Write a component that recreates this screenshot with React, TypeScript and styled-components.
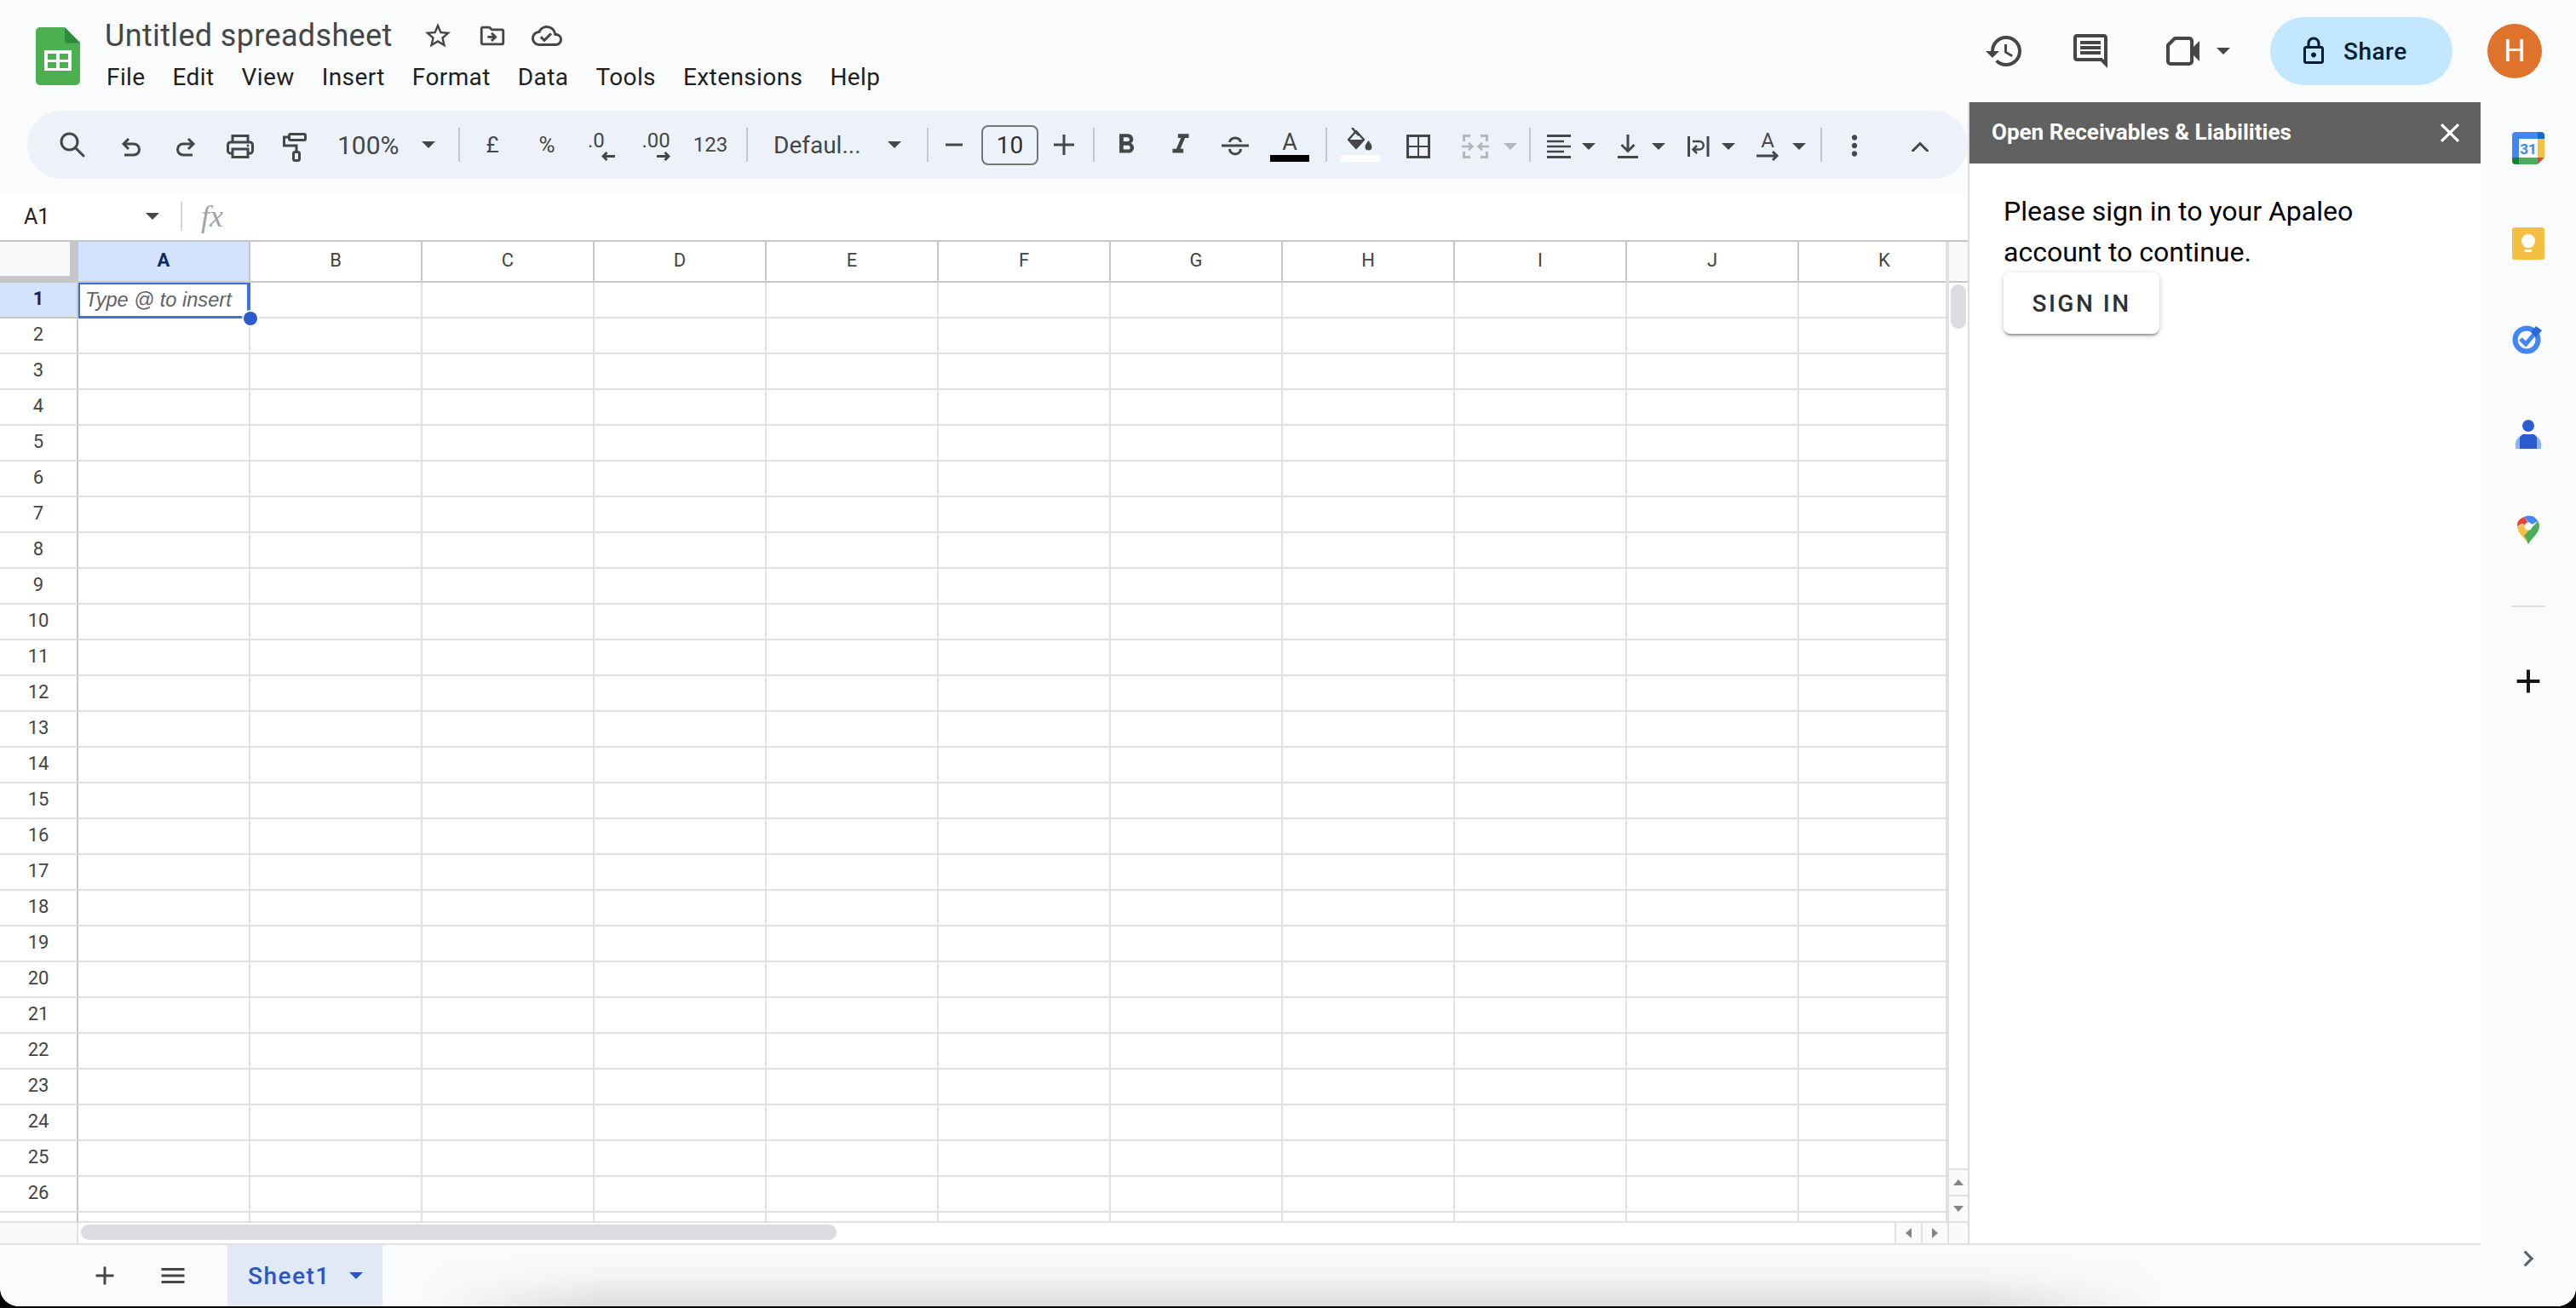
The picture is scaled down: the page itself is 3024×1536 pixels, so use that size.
import React from 'react'
import styled, { createGlobalStyle } from 'styled-components'
import {
  MdAdd,
  MdChevronRight,
  MdClose,
  MdFormatBold,
  MdFormatItalic,
  MdHistory,
  MdMenu,
  MdMoreVert,
  MdOutlineCloudDone,
  MdOutlineComment,
  MdOutlineDriveFileMove,
  MdOutlineLock,
  MdStarBorder
} from 'react-icons/md'

const GlobalStyle = createGlobalStyle`
  html, body {
    margin: 0;
    padding: 0;
    background: #000;
    overflow: hidden;
  }
  * { box-sizing: border-box; }
`

const INK = '#444746'
const MUTED = '#b4b6b9'
const LINE = '#e1e1e1'
const HEAD_LINE = '#c7c7c7'
const COLS = ['A', 'B', 'C', 'D', 'E', 'F', 'G', 'H', 'I', 'J', 'K']
const ROWS = Array.from({ length: 26 }, (_, i) => i + 1)

const SheetsLogo = () => (
  <svg width="52" height="68" viewBox="0 0 52 68">
    <path d="M5 0H34L52 18V63a5 5 0 0 1-5 5H5a5 5 0 0 1-5-5V5a5 5 0 0 1 5-5z" fill="#4caf50" />
    <path d="M34 0L52 18.500H37a3 3 0 0 1-3-3z" fill="#2e8b3d" />
    <rect x="10" y="27" width="32" height="24" fill="#fff" />
    <rect x="14" y="31" width="10" height="7" fill="#4caf50" />
    <rect x="28" y="31" width="10" height="7" fill="#4caf50" />
    <rect x="14" y="41" width="10" height="7" fill="#4caf50" />
    <rect x="28" y="41" width="10" height="7" fill="#4caf50" />
  </svg>
)

const VideoIcon = () => (
  <svg width="44" height="36" viewBox="0 0 44 36">
    <path
      d="M11 3H28a3 3 0 0 1 3 3V30a3 3 0 0 1-3 3H6a3 3 0 0 1-3-3V11z"
      fill="none"
      stroke={INK}
      strokeWidth="4"
      strokeLinejoin="round"
    />
    <path d="M33 13L40 6V30L33 23z" fill={INK} />
  </svg>
)

const Stroke = styled.svg`
  fill: none;
  stroke: ${INK};
  stroke-width: 3;
  flex: none;
`

const SearchIcon = () => (
  <Stroke width="30" height="30" viewBox="0 0 30 30">
    <circle cx="11.500" cy="11.500" r="9.500" />
    <path d="M18.500 18.500L28 28" strokeLinecap="round" />
  </Stroke>
)

const UndoIcon = () => (
  <Stroke width="24" height="22" viewBox="0 0 24 22">
    <path d="M9 1L3 7L9 13M3 7H15a6.500 6.500 0 0 1 0 13H4" />
  </Stroke>
)

const RedoIcon = () => (
  <Stroke width="24" height="22" viewBox="0 0 24 22">
    <path d="M15 1L21 7L15 13M21 7H9a6.500 6.500 0 0 0 0 13H20" />
  </Stroke>
)

const PrintIcon = () => (
  <Stroke width="32" height="28" viewBox="0 0 32 28">
    <path d="M7 9V1.500H25V9" />
    <rect x="1.500" y="9" width="29" height="13" rx="3" />
    <rect x="7" y="17" width="18" height="9.500" fill="#edf2fa" />
    <circle cx="25" cy="13" r="1.400" fill={INK} stroke="none" />
  </Stroke>
)

const PaintIcon = () => (
  <Stroke width="28" height="34" viewBox="0 0 28 34">
    <rect x="7.500" y="1.500" width="19" height="7" rx="1.500" />
    <path d="M7 5H1.500V15H16V22" />
    <rect x="12.500" y="22.500" width="7" height="10" rx="2" />
  </Stroke>
)

const SmallArrow = ({ left }: { left?: boolean }) => (
  <Stroke width="16" height="11" viewBox="0 0 16 11">
    <path d={left ? 'M16 5.500H2M6.500 1L2 5.500L6.500 10' : 'M0 5.500H14M9.500 1L14 5.500L9.500 10'} />
  </Stroke>
)

const StrikeIcon = () => (
  <Stroke width="34" height="26" viewBox="0 0 34 26">
    <path d="M1 13H33" />
    <path d="M10.500 9a6.500 5 0 0 1 13 0M10.500 17a6.500 6 0 0 0 13 0" />
  </Stroke>
)

const FillBucket = () => (
  <svg width="30" height="27" viewBox="0 0 30 27" fill={INK} style={{ flex: 'none' }}>
    <path d="M5 0L13 9" fill="none" stroke={INK} strokeWidth="2.500" />
    <path d="M10 4L19 14L10 24L1 14z" fill="none" stroke={INK} strokeWidth="2.500" strokeLinejoin="round" />
    <path d="M1 14H19L10 24z" />
    <path d="M24.500 15c2 3 4 5 4 7.500a4 4 0 0 1-8 0c0-2.500 2-4.500 4-7.500z" />
  </svg>
)

const BordersIcon = () => (
  <Stroke width="28" height="28" viewBox="0 0 28 28">
    <rect x="1.500" y="1.500" width="25" height="25" />
    <path d="M14 2V26M2 14H26" strokeWidth="2" />
  </Stroke>
)

const MergeIcon = () => (
  <svg width="32" height="28" viewBox="0 0 32 28" fill="none" stroke={MUTED} strokeWidth="3">
    <path d="M10 1.500H2.500V8M22 1.500H29.500V8M10 26.500H2.500V20M22 26.500H29.500V20" />
    <path d="M0 14H12M8 10L12.500 14L8 18M32 14H20M24 10L19.500 14L24 18" strokeWidth="2.500" />
  </svg>
)

const AlignIcon = () => (
  <Stroke width="28" height="28" viewBox="0 0 28 28">
    <path d="M0 1.500H28M0 26.500H28" />
    <path d="M0 8H20M0 14H28M0 20H20" strokeWidth="2.500" />
  </Stroke>
)

const ValignIcon = () => (
  <Stroke width="24" height="28" viewBox="0 0 24 28">
    <path d="M12 0V19M4.500 12L12 19.500L19.500 12" />
    <path d="M0 26.500H24" />
  </Stroke>
)

const WrapIcon = () => (
  <Stroke width="26" height="24" viewBox="0 0 26 24">
    <path d="M1.500 0V24M24 0V24" />
    <path d="M6 6H14a4.500 4.500 0 0 1 0 9.500H7M11 11L6.500 15.500L11 20" strokeWidth="2.500" />
  </Stroke>
)

const RotateArrow = () => (
  <Stroke width="26" height="12" viewBox="0 0 26 12">
    <path d="M0 6H24M19 1L24 6L19 11" />
  </Stroke>
)

const MinusIcon = () => (
  <Stroke width="20" height="4" viewBox="0 0 20 4">
    <path d="M0 2H20" />
  </Stroke>
)

const PlusIcon = () => (
  <Stroke width="26" height="26" viewBox="0 0 26 26">
    <path d="M13 1V25M1 13H25" />
  </Stroke>
)

const CollapseIcon = () => (
  <Stroke width="20" height="12" viewBox="0 0 20 12">
    <path d="M1.500 11L10 2.500L18.500 11" strokeLinecap="round" />
  </Stroke>
)

const CalendarIcon = () => (
  <svg width="38" height="38" viewBox="0 0 38 38">
    <path d="M4 0H34V8H8V30H0V4a4 4 0 0 1 4-4z" fill="#4285f4" />
    <path d="M30 0h4a4 4 0 0 1 4 4V8H30z" fill="#1967d2" />
    <path d="M30 8H38V30H30z" fill="#f4c142" />
    <path d="M8 30H30V38H8z" fill="#4cae5c" />
    <path d="M0 30H8V38H4a4 4 0 0 1-4-4z" fill="#188038" />
    <path d="M30 30H38L30 38z" fill="#ea4335" />
    <text x="19" y="26" textAnchor="middle" fontFamily="Roboto, sans-serif" fontSize="17" fontWeight="700" fill="#4285f4">
      31
    </text>
  </svg>
)

const KeepIcon = () => (
  <svg width="38" height="38" viewBox="0 0 38 38">
    <rect width="38" height="38" rx="3" fill="#f4bf42" />
    <circle cx="19" cy="16" r="8" fill="#fff" />
    <rect x="15" y="20" width="8" height="3" fill="#fff" />
    <rect x="15" y="26" width="8" height="3" fill="#fff" />
  </svg>
)

const TasksIcon = () => (
  <svg width="38" height="36" viewBox="0 0 38 36">
    <circle cx="17" cy="19" r="13.500" fill="none" stroke="#4285f4" strokeWidth="6" />
    <path d="M10 18L16 24L27 11" fill="none" stroke="#4285f4" strokeWidth="5" />
    <path d="M28 3L35 8L28 16L22 10z" fill="#2a67d8" />
  </svg>
)

const ContactsIcon = () => (
  <svg width="30" height="34" viewBox="0 0 30 34">
    <circle cx="15" cy="7" r="7" fill="#2a5bd0" />
    <path d="M0 34V28c0-6 6-11 15-11s15 5 15 11v6z" fill="#8fb1f6" />
    <path d="M5 34V22a5 5 0 0 1 5-5h10a5 5 0 0 1 5 5v12z" fill="#2a5bd0" />
  </svg>
)

const MapsIcon = () => (
  <svg width="26" height="34" viewBox="0 0 26 34">
    <path d="M13 34C10 28 0 21 0 13L10 10 16 22z" fill="#f4bf42" />
    <path d="M13 34C16 28 26 21 26 13c0-2-.5-4-1.500-6L8 24c2 3 4 6 5 10z" fill="#4cae5c" />
    <path d="M2 6C0 8 0 11 0 13l9-5z" fill="#ea4335" />
    <path d="M2 6L9 12 13 9 8 2C5.500 3 3.500 4 2 6z" fill="#ea4335" />
    <path d="M8 2C10 .5 16 0 20 2L24.500 7 17 11 13 8z" fill="#4285f4" />
    <circle cx="13" cy="13" r="4.500" fill="#fff" />
  </svg>
)

export default function App() {
  return (
    <Page>
      <GlobalStyle />
      <TopBar>
        <LogoSlot>
          <SheetsLogo />
        </LogoSlot>
        <TitleBlock>
          <TitleRow>
            <DocTitle>Untitled spreadsheet</DocTitle>
            <TitleIcons>
              <MdStarBorder size={36} color={INK} />
              <MdOutlineDriveFileMove size={34} color={INK} />
              <MdOutlineCloudDone size={36} color={INK} />
            </TitleIcons>
          </TitleRow>
          <MenuRow>
            {['File', 'Edit', 'View', 'Insert', 'Format', 'Data', 'Tools', 'Extensions', 'Help'].map((m) => (
              <MenuItem key={m}>{m}</MenuItem>
            ))}
          </MenuRow>
        </TitleBlock>
        <TopActions>
          <MdHistory size={48} color={INK} />
          <CommentSlot>
            <MdOutlineComment size={48} color={INK} />
          </CommentSlot>
          <VideoSlot>
            <VideoIcon />
            <Caret />
          </VideoSlot>
          <ShareButton>
            <MdOutlineLock size={36} color="#001d35" />
            Share
          </ShareButton>
          <Avatar>H</Avatar>
        </TopActions>
      </TopBar>

      <Body>
        <Workspace>
          <Middle>
            <SheetArea>
              <ToolbarWrap>
                <Toolbar>
                  <Tool $w={64}>
                    <SearchIcon />
                  </Tool>
                  <Tool $w={64} $ml={5} $down={3}>
                    <UndoIcon />
                  </Tool>
                  <Tool $w={64} $down={3}>
                    <RedoIcon />
                  </Tool>
                  <Tool $w={64} $down={2}>
                    <PrintIcon />
                  </Tool>
                  <Tool $w={64} $down={3}>
                    <PaintIcon />
                  </Tool>
                  <ZoomSelect>
                    100%
                    <Caret />
                  </ZoomSelect>
                  <Sep $ml={8} />
                  <Tool $w={64} $ml={6}>
                    <ToolText>£</ToolText>
                  </Tool>
                  <Tool $w={64}>
                    <ToolText>%</ToolText>
                  </Tool>
                  <Tool $w={64} $down={2}>
                    <DecimalStack $w={32}>
                      <DecimalText>.0</DecimalText>
                      <SmallArrow left />
                    </DecimalStack>
                  </Tool>
                  <Tool $w={64} $down={2}>
                    <DecimalStack $w={33}>
                      <DecimalText>.00</DecimalText>
                      <SmallArrow />
                    </DecimalStack>
                  </Tool>
                  <Tool $w={64}>
                    <NumFormat>123</NumFormat>
                  </Tool>
                  <Sep $ml={10} />
                  <FontSelect>
                    Defaul...
                    <Caret />
                  </FontSelect>
                  <Sep $ml={8} />
                  <Tool $w={60}>
                    <MinusIcon />
                  </Tool>
                  <SizeBox>10</SizeBox>
                  <Tool $w={60}>
                    <PlusIcon />
                  </Tool>
                  <Sep $ml={4} />
                  <Tool $w={64} $ml={5}>
                    <MdFormatBold size={38} />
                  </Tool>
                  <Tool $w={64}>
                    <MdFormatItalic size={38} />
                  </Tool>
                  <Tool $w={64} $down={1}>
                    <StrikeIcon />
                  </Tool>
                  <Tool $w={64}>
                    <SwatchStack>
                      <SwatchLetter>A</SwatchLetter>
                      <Swatch $color="#000" />
                    </SwatchStack>
                  </Tool>
                  <Sep $ml={10} />
                  <Tool $w={64} $ml={7}>
                    <SwatchStack>
                      <FillBucket />
                      <Swatch $color="#fff" />
                    </SwatchStack>
                  </Tool>
                  <Tool $w={64} $ml={4} $down={2}>
                    <BordersIcon />
                  </Tool>
                  <Tool $w={64} $ml={3} $down={2}>
                    <MergeIcon />
                  </Tool>
                  <Tool $w={18} $down={2}>
                    <Caret $color={MUTED} />
                  </Tool>
                  <Sep $ml={13} />
                  <Tool $w={40} $ml={13} $down={2}>
                    <AlignIcon />
                  </Tool>
                  <Tool $w={30} $down={2}>
                    <Caret />
                  </Tool>
                  <Tool $w={40} $ml={11} $down={2}>
                    <ValignIcon />
                  </Tool>
                  <Tool $w={32} $down={2}>
                    <Caret />
                  </Tool>
                  <Tool $w={40} $ml={11} $down={2}>
                    <WrapIcon />
                  </Tool>
                  <Tool $w={30} $down={2}>
                    <Caret />
                  </Tool>
                  <Tool $w={40} $ml={11} $down={2}>
                    <RotateStack>
                      <RotateLetter>A</RotateLetter>
                      <RotateArrow />
                    </RotateStack>
                  </Tool>
                  <Tool $w={34} $down={2}>
                    <Caret />
                  </Tool>
                  <Sep $ml={8} />
                  <Tool $w={64} $ml={6} $down={1}>
                    <MdMoreVert size={38} />
                  </Tool>
                  <Tool $w={64} $ml={13} $down={2}>
                    <CollapseIcon />
                  </Tool>
                </Toolbar>
              </ToolbarWrap>

              <FormulaBar>
                <NameBox>
                  A1
                  <Caret />
                </NameBox>
                <FormulaSep />
                <Fx>fx</Fx>
              </FormulaBar>

              <GridWrap>
                <GridMain>
                  <HeaderRow>
                    <Corner />
                    {COLS.map((c, i) => (
                      <ColHead key={c} $active={i === 0} $narrow={c === 'K'}>
                        {c}
                      </ColHead>
                    ))}
                  </HeaderRow>
                  {ROWS.map((r) => (
                    <Row key={r}>
                      <RowHead $active={r === 1}>{r}</RowHead>
                      {COLS.map((c) => (
                        <Cell key={c} $narrow={c === 'K'}>
                          {r === 1 && c === 'A' ? (
                            <Selection>
                              Type @ to insert
                              <Handle />
                            </Selection>
                          ) : null}
                        </Cell>
                      ))}
                    </Row>
                  ))}
                  <PartialRow>
                    <RowHead />
                    {COLS.map((c) => (
                      <Cell key={c} $narrow={c === 'K'} />
                    ))}
                  </PartialRow>
                  <HScroll>
                    <HScrollStart />
                    <HThumb />
                    <HArrow>
                      <SmallTri $dir="left" />
                    </HArrow>
                    <HArrow>
                      <SmallTri $dir="right" />
                    </HArrow>
                  </HScroll>
                </GridMain>
                <VScroll>
                  <VCorner />
                  <VThumb />
                  <VArrow>
                    <SmallTri $dir="up" />
                  </VArrow>
                  <VArrow>
                    <SmallTri $dir="down" />
                  </VArrow>
                  <VEnd />
                </VScroll>
              </GridWrap>
            </SheetArea>

            <SidePanel>
              <PanelHeader>
                <PanelTitle>Open Receivables &amp; Liabilities</PanelTitle>
                <MdClose size={38} color="#fff" />
              </PanelHeader>
              <PanelBody>
                <PanelText>Please sign in to your Apaleo account to continue.</PanelText>
                <SignIn>SIGN IN</SignIn>
              </PanelBody>
            </SidePanel>
          </Middle>

          <Footer>
            <FooterTool $ml={105}>
              <MdAdd size={36} />
            </FooterTool>
            <FooterTool $ml={44}>
              <MdMenu size={38} />
            </FooterTool>
            <SheetTab>
              Sheet1
              <Caret $color="#2a56c6" />
            </SheetTab>
          </Footer>
        </Workspace>

        <Rail>
          <RailItem>
            <CalendarIcon />
          </RailItem>
          <RailItem>
            <KeepIcon />
          </RailItem>
          <RailItem>
            <TasksIcon />
          </RailItem>
          <RailItem>
            <ContactsIcon />
          </RailItem>
          <RailItem>
            <MapsIcon />
          </RailItem>
          <RailDivider />
          <RailPlus>
            <MdAdd size={46} color="#111" />
          </RailPlus>
          <RailToggle>
            <MdChevronRight size={38} color="#5f6368" />
          </RailToggle>
        </Rail>
      </Body>
    </Page>
  )
}

const Page = styled.div`
  width: 3024px;
  height: 1534px;
  display: flex;
  flex-direction: column;
  background: #f9fbfd;
  border-radius: 0 0 22px 22px;
  overflow: hidden;
  font-family: Roboto, 'Liberation Sans', sans-serif;
  color: #1f1f1f;
`

const TopBar = styled.div`
  height: 120px;
  flex: none;
  display: flex;
  align-items: flex-start;
  padding-left: 42px;
`

const LogoSlot = styled.div`
  width: 81px;
  padding-top: 32px;
  flex: none;
`

const TitleBlock = styled.div`
  display: flex;
  flex-direction: column;
  padding-top: 18px;
`

const TitleRow = styled.div`
  display: flex;
  align-items: center;
  height: 48px;
`

const DocTitle = styled.div`
  font-size: 36px;
  letter-spacing: 0.35px;
  color: #444746;
  width: 373px;
  white-space: nowrap;
`

const TitleIcons = styled.div`
  display: flex;
  align-items: center;
  gap: 29px;
`

const MenuRow = styled.div`
  display: flex;
  gap: 32px;
  margin-top: 6px;
  padding-left: 2px;
`

const MenuItem = styled.div`
  font-size: 28px;
  letter-spacing: 0.4px;
  line-height: 38px;
  color: #1f1f1f;
`

const TopActions = styled.div`
  margin-left: auto;
  display: flex;
  align-items: center;
  height: 80px;
  margin-top: 20px;
  padding-right: 40px;
`

const CommentSlot = styled.div`
  display: flex;
  margin-left: 53px;
`

const VideoSlot = styled.div`
  display: flex;
  align-items: center;
  gap: 16px;
  margin-left: 64px;
  width: 119px;
`

const ShareButton = styled.div`
  width: 214px;
  height: 80px;
  margin-left: 4px;
  border-radius: 40px;
  background: #c2e7ff;
  color: #001d35;
  display: flex;
  align-items: center;
  gap: 17px;
  padding-left: 33px;
  font-size: 28px;
  letter-spacing: 0.5px;
  font-weight: 500;
`

const Avatar = styled.div`
  width: 64px;
  height: 64px;
  margin-left: 41px;
  border-radius: 50%;
  background: #e0732c;
  color: #fff;
  font-size: 36px;
  display: flex;
  align-items: center;
  justify-content: center;
`

const Body = styled.div`
  flex: 1;
  display: flex;
  min-height: 0;
`

const Workspace = styled.div`
  width: 2912px;
  display: flex;
  flex-direction: column;
`

const Middle = styled.div`
  height: 1340px;
  flex: none;
  display: flex;
  background: #fff;
`

const SheetArea = styled.div`
  width: 2310px;
  display: flex;
  flex-direction: column;
`

const ToolbarWrap = styled.div`
  height: 106px;
  flex: none;
  background: #f9fbfd;
  padding: 10px 0 16px 32px;
`

const Toolbar = styled.div`
  height: 80px;
  width: 2278px;
  border-radius: 40px;
  background: #edf2fa;
  display: flex;
  align-items: center;
  padding-left: 21px;
  color: ${INK};
`

const Tool = styled.div<{ $w: number; $ml?: number; $down?: number }>`
  width: ${(p) => p.$w}px;
  margin-left: ${(p) => p.$ml ?? 0}px;
  padding-top: ${(p) => (p.$down ?? 0) * 2}px;
  height: 60px;
  flex: none;
  display: flex;
  align-items: center;
  justify-content: center;
`

const Caret = styled.span<{ $color?: string }>`
  display: inline-block;
  flex: none;
  width: 0;
  height: 0;
  border-left: 8px solid transparent;
  border-right: 8px solid transparent;
  border-top: 8px solid ${(p) => p.$color ?? INK};
`

const Sep = styled.div<{ $ml?: number }>`
  width: 2px;
  height: 40px;
  flex: none;
  margin-left: ${(p) => p.$ml ?? 0}px;
  background: #c7c7c7;
`

const ToolText = styled.span`
  font-size: 26px;
  line-height: 26px;
`

const NumFormat = styled.span`
  font-size: 24px;
`

const DecimalStack = styled.div<{ $w: number }>`
  width: ${(p) => p.$w}px;
  display: flex;
  flex-direction: column;
  align-items: flex-end;
`

const DecimalText = styled.span`
  align-self: flex-start;
  font-size: 24px;
  line-height: 20px;
  margin-bottom: 3px;
  white-space: nowrap;
`

const RotateStack = styled.div`
  display: flex;
  flex-direction: column;
  align-items: center;
`

const RotateLetter = styled.span`
  font-size: 24px;
  line-height: 20px;
  margin-bottom: 2px;
`

const ZoomSelect = styled.div`
  width: 152px;
  flex: none;
  display: flex;
  align-items: center;
  gap: 26px;
  padding-left: 18px;
  font-size: 30px;
`

const FontSelect = styled.div`
  width: 194px;
  margin-left: 8px;
  flex: none;
  display: flex;
  align-items: center;
  padding-left: 22px;
  font-size: 28px;
  ${Caret} {
    margin-left: auto;
    margin-right: 22px;
  }
`

const SizeBox = styled.div`
  width: 67px;
  height: 47px;
  margin-left: 2px;
  flex: none;
  border: 2px solid #747775;
  border-radius: 8px;
  display: flex;
  align-items: center;
  justify-content: center;
  font-size: 28px;
  color: #303030;
`

const SwatchStack = styled.div`
  width: 46px;
  height: 40px;
  display: flex;
  flex-direction: column;
  align-items: center;
  justify-content: flex-end;
  svg {
    margin-bottom: 5px;
  }
`

const SwatchLetter = styled.span`
  font-size: 27px;
  line-height: 20px;
  margin-bottom: 5px;
`

const Swatch = styled.div<{ $color: string }>`
  width: 46px;
  height: 8px;
  flex: none;
  background: ${(p) => p.$color};
`

const FormulaBar = styled.div`
  height: 56px;
  flex: none;
  display: flex;
  align-items: center;
  background: #fff;
`

const NameBox = styled.div`
  width: 212px;
  display: flex;
  align-items: center;
  padding-left: 28px;
  font-size: 25px;
  color: #1f1f1f;
  ${Caret} {
    margin-left: auto;
    margin-right: 25px;
  }
`

const FormulaSep = styled.div`
  width: 2px;
  height: 34px;
  background: #d5d5d5;
`

const Fx = styled.div`
  margin-left: 22px;
  font-family: 'Liberation Serif', serif;
  font-style: italic;
  font-size: 36px;
  color: #a3a3a3;
`

const GridWrap = styled.div`
  flex: 1;
  display: flex;
  min-height: 0;
  border-top: 2px solid ${HEAD_LINE};
`

const GridMain = styled.div`
  width: 2286px;
  flex: none;
  display: flex;
  flex-direction: column;
`

const HeaderRow = styled.div`
  height: 48px;
  flex: none;
  display: flex;
`

const Corner = styled.div`
  width: 92px;
  flex: none;
  background: #f8f9fa;
  border-right: 10px solid ${HEAD_LINE};
  border-bottom: 8px solid ${HEAD_LINE};
`

const ColHead = styled.div<{ $active?: boolean; $narrow?: boolean }>`
  width: ${(p) => (p.$narrow ? 174 : 202)}px;
  flex: none;
  display: flex;
  align-items: center;
  justify-content: center;
  border-right: 2px solid ${(p) => (p.$narrow ? LINE : HEAD_LINE)};
  border-bottom: 2px solid ${HEAD_LINE};
  background: ${(p) => (p.$active ? '#d3e3fd' : '#fff')};
  color: ${(p) => (p.$active ? '#0b2a63' : '#444')};
  font-weight: ${(p) => (p.$active ? 700 : 400)};
  font-size: 22px;
  padding-left: ${(p) => (p.$narrow ? 28 : 0)}px;
  padding-bottom: 3px;
`

const Row = styled.div`
  height: 42px;
  flex: none;
  display: flex;
`

const PartialRow = styled(Row)`
  height: 12px;
`

const RowHead = styled.div<{ $active?: boolean }>`
  width: 92px;
  flex: none;
  display: flex;
  align-items: center;
  justify-content: center;
  border-right: 2px solid ${HEAD_LINE};
  border-bottom: 2px solid ${(p) => (p.$active ? HEAD_LINE : LINE)};
  background: ${(p) => (p.$active ? '#d3e3fd' : '#fff')};
  color: ${(p) => (p.$active ? '#0b2a63' : '#444')};
  font-weight: ${(p) => (p.$active ? 700 : 400)};
  font-size: 22px;
  padding-bottom: 3px;
`

const Cell = styled.div<{ $narrow?: boolean }>`
  width: ${(p) => (p.$narrow ? 174 : 202)}px;
  flex: none;
  position: relative;
  border-right: 2px solid ${LINE};
  border-bottom: 2px solid ${LINE};
`

const Selection = styled.div`
  position: absolute;
  top: 0;
  left: 0;
  z-index: 2;
  width: 202px;
  height: 42px;
  border-style: solid;
  border-color: #3b72e0;
  border-width: 2px 4px 3px 2px;
  display: flex;
  align-items: center;
  padding-left: 6px;
  font-family: 'Liberation Sans', Arial, sans-serif;
  font-style: italic;
  font-size: 23.600px;
  color: #5f6368;
  background: #fff;
  white-space: nowrap;
`

const Handle = styled.span`
  position: absolute;
  right: -12px;
  bottom: -11px;
  width: 16px;
  height: 16px;
  border-radius: 50%;
  background: #2a5bd0;
  box-shadow: 0 0 0 2px #fff;
`

const HScroll = styled.div`
  height: 24px;
  flex: none;
  display: flex;
  align-items: stretch;
`

const HScrollStart = styled.div`
  width: 92px;
  flex: none;
  background: #f8f9fa;
  border-right: 2px solid ${LINE};
`

const HThumb = styled.div`
  width: 887px;
  height: 18px;
  margin: 2px auto 0 3px;
  border-radius: 9px;
  background: #dadce0;
`

const HArrow = styled.div`
  width: 31px;
  flex: none;
  background: #fafafa;
  border-left: 2px solid ${LINE};
  display: flex;
  align-items: center;
  justify-content: center;
`

const SmallTri = styled.span<{ $dir: 'left' | 'right' | 'up' | 'down' }>`
  width: 0;
  height: 0;
  border: 6px solid transparent;
  ${(p) => (p.$dir === 'left' ? 'border-left-width: 0; border-right: 7px solid #80868b;' : '')}
  ${(p) => (p.$dir === 'right' ? 'border-right-width: 0; border-left: 7px solid #80868b;' : '')}
  ${(p) => (p.$dir === 'up' ? 'border-top-width: 0; border-bottom: 7px solid #80868b;' : '')}
  ${(p) => (p.$dir === 'down' ? 'border-bottom-width: 0; border-top: 7px solid #80868b;' : '')}
`

const VScroll = styled.div`
  width: 24px;
  flex: none;
  display: flex;
  flex-direction: column;
  border-left: 2px solid ${LINE};
`

const VCorner = styled.div`
  height: 48px;
  flex: none;
  background: #f8f9fa;
  border-bottom: 2px solid ${HEAD_LINE};
`

const VThumb = styled.div`
  width: 18px;
  height: 52px;
  margin: 2px 0 auto 2px;
  border-radius: 9px;
  background: #dadce0;
`

const VArrow = styled.div`
  height: 31px;
  flex: none;
  background: #fafafa;
  border-top: 2px solid ${LINE};
  display: flex;
  align-items: center;
  justify-content: center;
`

const VEnd = styled.div`
  height: 26px;
  flex: none;
  background: #fafafa;
  border-top: 2px solid ${LINE};
`

const SidePanel = styled.div`
  width: 602px;
  flex: none;
  display: flex;
  flex-direction: column;
  background: #fff;
  border-left: 2px solid #dadce0;
`

const PanelHeader = styled.div`
  height: 72px;
  flex: none;
  background: #616161;
  display: flex;
  align-items: center;
  justify-content: space-between;
  padding: 0 17px 0 26px;
  color: #fff;
`

const PanelTitle = styled.div`
  font-size: 26px;
  line-height: 30px;
  padding-bottom: 2px;
  font-weight: 700;
  color: #fff;
`

const PanelBody = styled.div`
  padding: 32px 60px 0 40px;
`

const PanelText = styled.div`
  font-size: 32px;
  line-height: 48px;
  color: #000;
`

const SignIn = styled.div`
  width: 183px;
  height: 72px;
  border-radius: 8px;
  background: #fff;
  box-shadow: 0 3px 2px -1px rgba(0, 0, 0, 0.3), 0 2px 6px rgba(0, 0, 0, 0.14), 0 1px 8px rgba(0, 0, 0, 0.08);
  display: flex;
  align-items: center;
  justify-content: center;
  font-size: 28px;
  font-weight: 500;
  letter-spacing: 2.500px;
  color: #303030;
`

const Footer = styled.div`
  flex: 1;
  position: relative;
  display: flex;
  align-items: stretch;
  border-top: 2px solid ${LINE};
  background: #f9fbfd;

  &::after {
    content: '';
    position: absolute;
    left: 490px;
    right: 372px;
    bottom: 0;
    height: 62px;
    background: linear-gradient(to top, rgba(0, 0, 0, 0.12), rgba(0, 0, 0, 0.03) 55%, transparent);
    mask-image: linear-gradient(to right, transparent, #000 220px, #000 calc(100% - 220px), transparent);
  }
`

const FooterTool = styled.div<{ $ml: number }>`
  width: 36px;
  margin-left: ${(p) => p.$ml}px;
  flex: none;
  display: flex;
  align-items: center;
  justify-content: center;
  color: ${INK};
`

const SheetTab = styled.div`
  width: 182px;
  margin-left: 46px;
  flex: none;
  display: flex;
  align-items: center;
  gap: 22px;
  padding-left: 24px;
  background: #e1e9f7;
  color: #2a56c6;
  font-size: 28px;
  letter-spacing: 1.500px;
  font-weight: 500;
`

const Rail = styled.div`
  width: 112px;
  flex: none;
  display: flex;
  flex-direction: column;
  align-items: center;
  background: #f9fbfd;
`

const RailItem = styled.div`
  height: 112px;
  flex: none;
  display: flex;
  align-items: center;
  justify-content: center;
  padding-bottom: 4px;
`

const RailDivider = styled.div`
  width: 40px;
  height: 2px;
  flex: none;
  margin-top: 31px;
  background: #dadce0;
`

const RailPlus = styled.div`
  display: flex;
  flex: none;
  margin-top: 64px;
`

const RailToggle = styled.div`
  display: flex;
  margin-top: auto;
  padding-bottom: 37px;
`
